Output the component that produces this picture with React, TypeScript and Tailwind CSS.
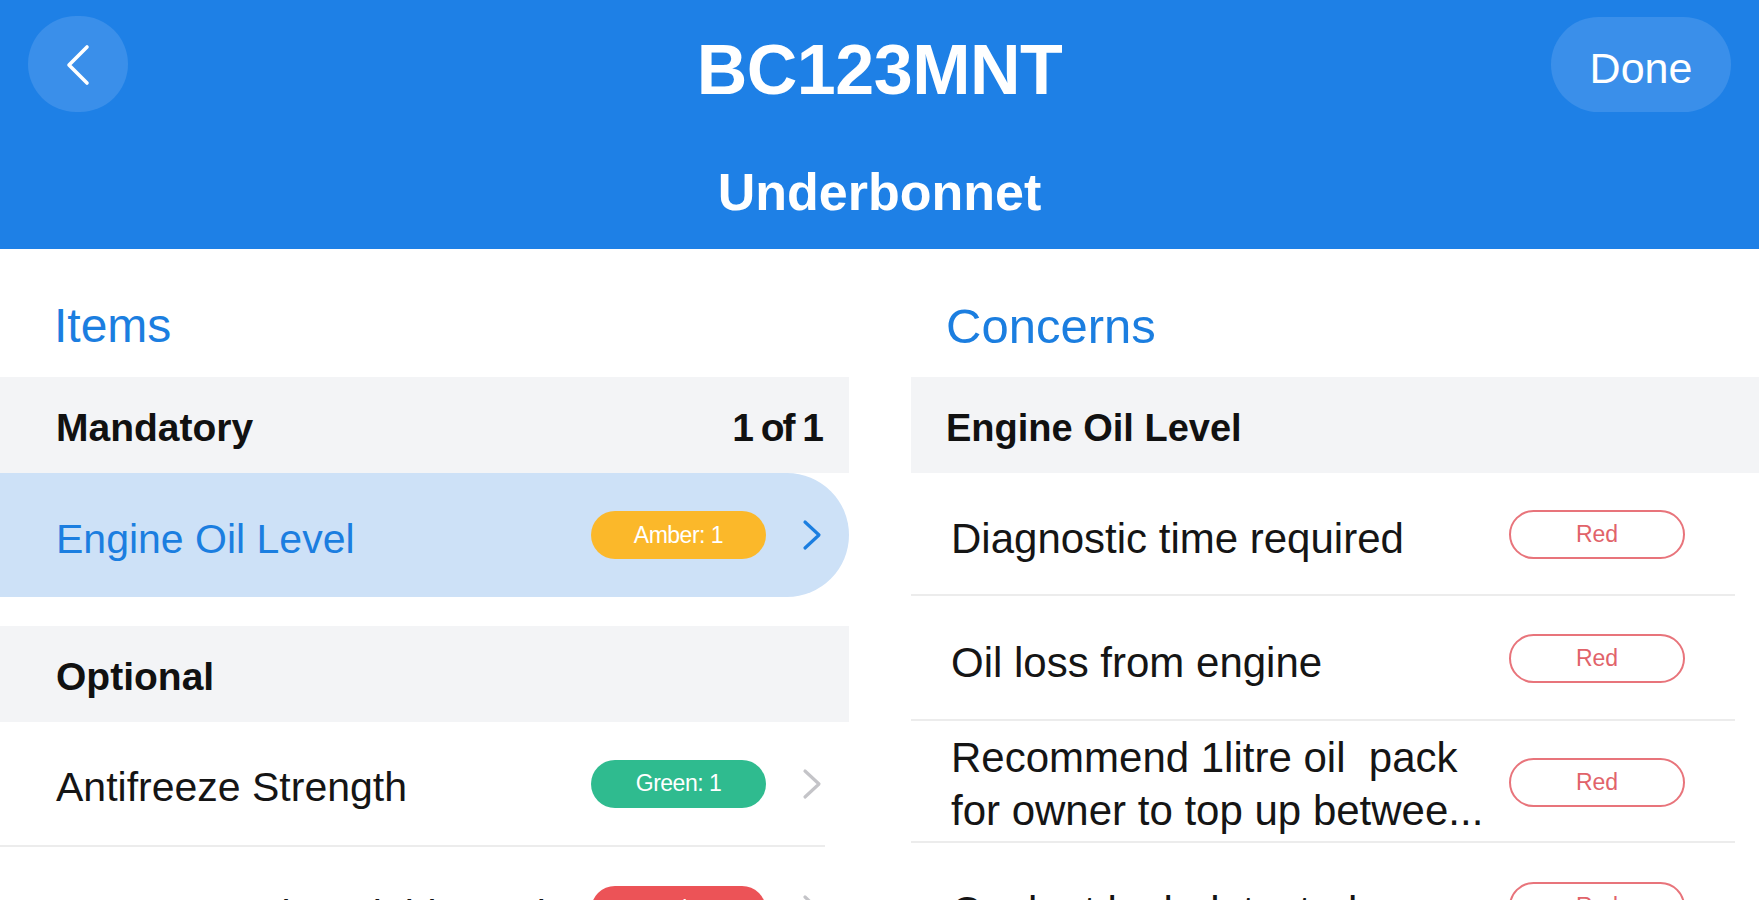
import React from "react";

const font = { fontFamily: '"Liberation Sans", Arial, Helvetica, sans-serif' };

function Chevron({ color, className }: { color: string; className?: string }) {
  return (
    <svg viewBox="0 0 20 32" className={className} fill="none">
      <polyline points="3,3 17,16 3,29" stroke={color} strokeWidth="3.2" strokeLinecap="round" strokeLinejoin="round" />
    </svg>
  );
}

function BackChevron() {
  return (
    <svg viewBox="0 0 26 42" className="w-[26px] h-[42px] mt-[2px]" fill="none">
      <polyline points="22,3 4,21 22,39" stroke="white" strokeWidth="3.6" strokeLinecap="round" strokeLinejoin="round" />
    </svg>
  );
}

function FilledBadge({ label, bg }: { label: string; bg: string }) {
  return (
    <div className={`w-[175px] h-[48px] rounded-full flex items-center justify-center text-white text-[23px] tracking-[-0.5px] shrink-0 ${bg}`}>
      {label}
    </div>
  );
}

function RedOutline() {
  return (
    <div className="w-[176px] h-[49px] rounded-full border-2 border-[#e8747b] flex items-center justify-center text-[#e1636a] text-[23px] shrink-0 mt-[2px]">
      Red
    </div>
  );
}

export default function App() {
  return (
    <div className="w-[1759px] h-[900px] overflow-hidden bg-white" style={font}>
      {/* Header */}
      <header className="h-[249px] bg-[#1e80e6] text-white flex flex-col">
        <div className="grid grid-cols-[1fr_auto_1fr] items-center h-[96px] mt-[16px] px-[28px]">
          <div className="flex">
            <button className="w-[100px] h-[96px] rounded-full bg-[#3a8fea] flex items-center justify-center">
              <BackChevron />
            </button>
          </div>
          <div className="text-[70px] font-bold leading-none tracking-[-0.5px] pt-[12px]">BC123MNT</div>
          <div className="flex justify-end">
            <button className="w-[180px] h-[95px] rounded-full bg-[#3a8fea] flex items-center justify-center text-[43px] text-white pt-[9px]">
              Done
            </button>
          </div>
        </div>
        <div className="mt-[54px] text-center text-[52px] font-bold leading-[52px]">Underbonnet</div>
      </header>

      {/* Body */}
      <div className="flex gap-[62px]">
        {/* Items column */}
        <div className="w-[849px] shrink-0">
          <div className="pt-[53px] pb-[27px] pl-[54px] text-[48px] leading-[48px] text-[#1b7ee0]">Items</div>

          <div className="h-[96px] bg-[#f3f4f6] flex items-center justify-between pl-[56px] pr-[27px] pt-[6px] text-[39px] font-semibold text-[#111]">
            <span>Mandatory</span>
            <span className="tracking-[-2px]">1 of 1</span>
          </div>

          <div className="h-[124px] bg-[#cde1f7] rounded-r-full flex items-center pl-[56px] pr-[27px]">
            <span className="flex-1 text-[41px] text-[#1b7ee0] pt-[9px]">Engine Oil Level</span>
            <FilledBadge label="Amber: 1" bg="bg-[#fbb82a]" />
            <Chevron color="#1b7ee0" className="w-[20px] h-[32px] ml-[36px]" />
          </div>

          <div className="h-[29px]" />

          <div className="h-[96px] bg-[#f3f4f6] flex items-center pl-[56px] pt-[6px] text-[39px] font-semibold text-[#111]">
            Optional
          </div>

          <div className="h-[125px] flex items-center pl-[56px] pr-[27px] border-b-2 border-[#ececec] mr-[24px]">
            <span className="flex-1 text-[41px] text-[#151515] pt-[9px]">Antifreeze Strength</span>
            <FilledBadge label="Green: 1" bg="bg-[#2fbb8f]" />
            <Chevron color="#c4c4c8" className="w-[20px] h-[32px] ml-[36px] mr-[-24px]" />
          </div>

          <div className="h-[125px] flex items-center pl-[56px] pr-[27px]">
            <span className="flex-1 text-[41px] text-[#151515] pt-[12px]">Power Steering Fluid Level</span>
            <FilledBadge label="Red: 1" bg="bg-[#ec5357]" />
            <Chevron color="#c4c4c8" className="w-[20px] h-[32px] ml-[36px]" />
          </div>
        </div>

        {/* Concerns column */}
        <div className="flex-1">
          <div className="pt-[53px] pb-[27px] pl-[35px] text-[49px] leading-[48px] text-[#1b7ee0]">Concerns</div>

          <div className="h-[96px] bg-[#f3f4f6] flex items-center pl-[35px] pt-[6px] text-[38px] font-semibold text-[#111]">
            Engine Oil Level
          </div>

          <div className="mr-[24px]">
            <div className="h-[123px] flex items-center pl-[40px] pr-[50px] border-b-2 border-[#ececec]">
              <span className="flex-1 text-[42px] text-[#151515] pt-[9px]">Diagnostic time required</span>
              <RedOutline />
            </div>
            <div className="h-[125px] flex items-center pl-[40px] pr-[50px] border-b-2 border-[#ececec]">
              <span className="flex-1 text-[42px] text-[#151515] pt-[9px]">Oil loss from engine</span>
              <RedOutline />
            </div>
            <div className="h-[122px] flex items-center pl-[40px] pr-[50px] border-b-2 border-[#ececec]">
              <span className="flex-1 text-[42px] leading-[53px] text-[#151515] whitespace-pre pt-[6px]">
                {"Recommend 1litre oil  pack\nfor owner to top up betwee..."}
              </span>
              <RedOutline />
            </div>
            <div className="h-[125px] flex items-center pl-[40px] pr-[50px]">
              <span className="flex-1 text-[42px] text-[#151515] pt-[12px]">Coolant leak detected</span>
              <RedOutline />
            </div>
          </div>
        </div>
      </div>
    </div>
  );
}
